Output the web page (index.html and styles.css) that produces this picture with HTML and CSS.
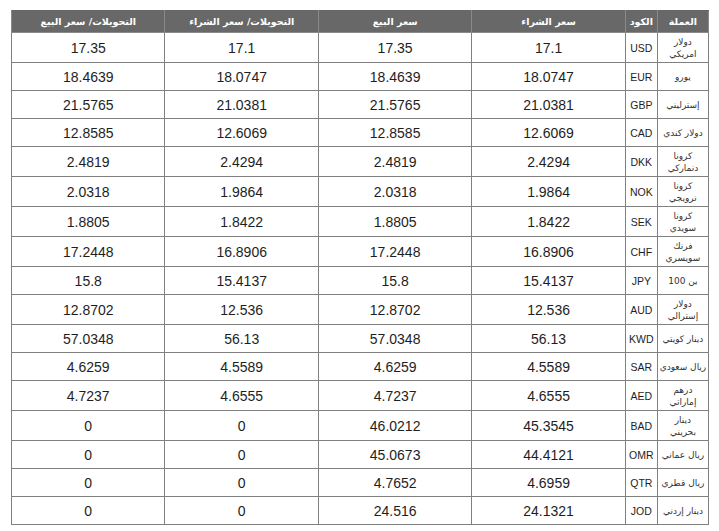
FILE: index.html
```html
<!DOCTYPE html>
<html lang="ar" dir="rtl">
<head>
<meta charset="utf-8">
<title>أسعار العملات</title>
<link rel="stylesheet" href="styles.css">
</head>
<body>
<table class="rates">
  <colgroup>
    <col class="c-name"><col class="c-code"><col class="c-num"><col class="c-num"><col class="c-num"><col class="c-num">
  </colgroup>
  <thead>
    <tr class="head">
      <th>العملة</th><th>الكود</th><th>سعر الشراء</th><th>سعر البيع</th><th>التحويلات/ سعر الشراء</th><th>التحويلات/ سعر البيع</th>
    </tr>
  </thead>
  <tbody>
    <tr class="r2"><td class="name">دولار<br>امريكي</td><td class="code">USD</td><td>17.1</td><td>17.35</td><td>17.1</td><td>17.35</td></tr>
    <tr class="r1"><td class="name">يورو</td><td class="code">EUR</td><td>18.0747</td><td>18.4639</td><td>18.0747</td><td>18.4639</td></tr>
    <tr class="r1"><td class="name">إسترليني</td><td class="code">GBP</td><td>21.0381</td><td>21.5765</td><td>21.0381</td><td>21.5765</td></tr>
    <tr class="r1"><td class="name">دولار كندي</td><td class="code">CAD</td><td>12.6069</td><td>12.8585</td><td>12.6069</td><td>12.8585</td></tr>
    <tr class="r2"><td class="name">كرونا<br>دنماركي</td><td class="code">DKK</td><td>2.4294</td><td>2.4819</td><td>2.4294</td><td>2.4819</td></tr>
    <tr class="r2"><td class="name">كرونا<br>نرويجي</td><td class="code">NOK</td><td>1.9864</td><td>2.0318</td><td>1.9864</td><td>2.0318</td></tr>
    <tr class="r2"><td class="name">كرونا<br>سويدي</td><td class="code">SEK</td><td>1.8422</td><td>1.8805</td><td>1.8422</td><td>1.8805</td></tr>
    <tr class="r2"><td class="name">فرنك<br>سويسري</td><td class="code">CHF</td><td>16.8906</td><td>17.2448</td><td>16.8906</td><td>17.2448</td></tr>
    <tr class="r1"><td class="name">ين 100</td><td class="code">JPY</td><td>15.4137</td><td>15.8</td><td>15.4137</td><td>15.8</td></tr>
    <tr class="r2"><td class="name">دولار<br>إسترالي</td><td class="code">AUD</td><td>12.536</td><td>12.8702</td><td>12.536</td><td>12.8702</td></tr>
    <tr class="r1"><td class="name">دينار كويتي</td><td class="code">KWD</td><td>56.13</td><td>57.0348</td><td>56.13</td><td>57.0348</td></tr>
    <tr class="r1"><td class="name">ريال سعودي</td><td class="code">SAR</td><td>4.5589</td><td>4.6259</td><td>4.5589</td><td>4.6259</td></tr>
    <tr class="r2"><td class="name">درهم<br>إماراتي</td><td class="code">AED</td><td>4.6555</td><td>4.7237</td><td>4.6555</td><td>4.7237</td></tr>
    <tr class="r2"><td class="name">دينار<br>بحريني</td><td class="code">BAD</td><td>45.3545</td><td>46.0212</td><td>0</td><td>0</td></tr>
    <tr class="r1"><td class="name">ريال عماني</td><td class="code">OMR</td><td>44.4121</td><td>45.0673</td><td>0</td><td>0</td></tr>
    <tr class="r1"><td class="name">ريال قطري</td><td class="code">QTR</td><td>4.6959</td><td>4.7652</td><td>0</td><td>0</td></tr>
    <tr class="r1"><td class="name">دينار إردني</td><td class="code">JOD</td><td>24.1321</td><td>24.516</td><td>0</td><td>0</td></tr>
  </tbody>
</table>
</body>
</html>
```
FILE: styles.css
```css
html, body {
  margin: 0;
  padding: 0;
  background: #ffffff;
}
body {
  padding: 10px 10px 0 12px;
  font-family: "Liberation Sans", Arial, "DejaVu Sans", sans-serif;
  color: #222;
}
.rates {
  width: 698px;
  table-layout: fixed;
  border-collapse: collapse;
  direction: rtl;
}
.c-name { width: 51px; }
.c-code { width: 32px; }
.c-num { width: 153px; }
.rates th, .rates td {
  border: 1px solid #808080;
  padding: 0;
  text-align: center;
  vertical-align: middle;
}
.head {
  height: 22px;
}
.rates th {
  background: #686868;
  color: #ffffff;
  font-family: "DejaVu Sans", sans-serif;
  font-weight: bold;
  font-size: 9.5px;
  border-color: #8a8a8a;
  border-top-color: #686868;
}
.r1 { height: 28px; }
.r2 { height: 30px; }
.rates td {
  font-size: 14px;
  color: #1e1e1e;
}
.rates td.code {
  font-size: 10.5px;
}
.rates td.name {
  font-family: "DejaVu Sans", sans-serif;
  font-size: 9px;
  line-height: 12px;
  color: #333;
  white-space: nowrap;
}
```
